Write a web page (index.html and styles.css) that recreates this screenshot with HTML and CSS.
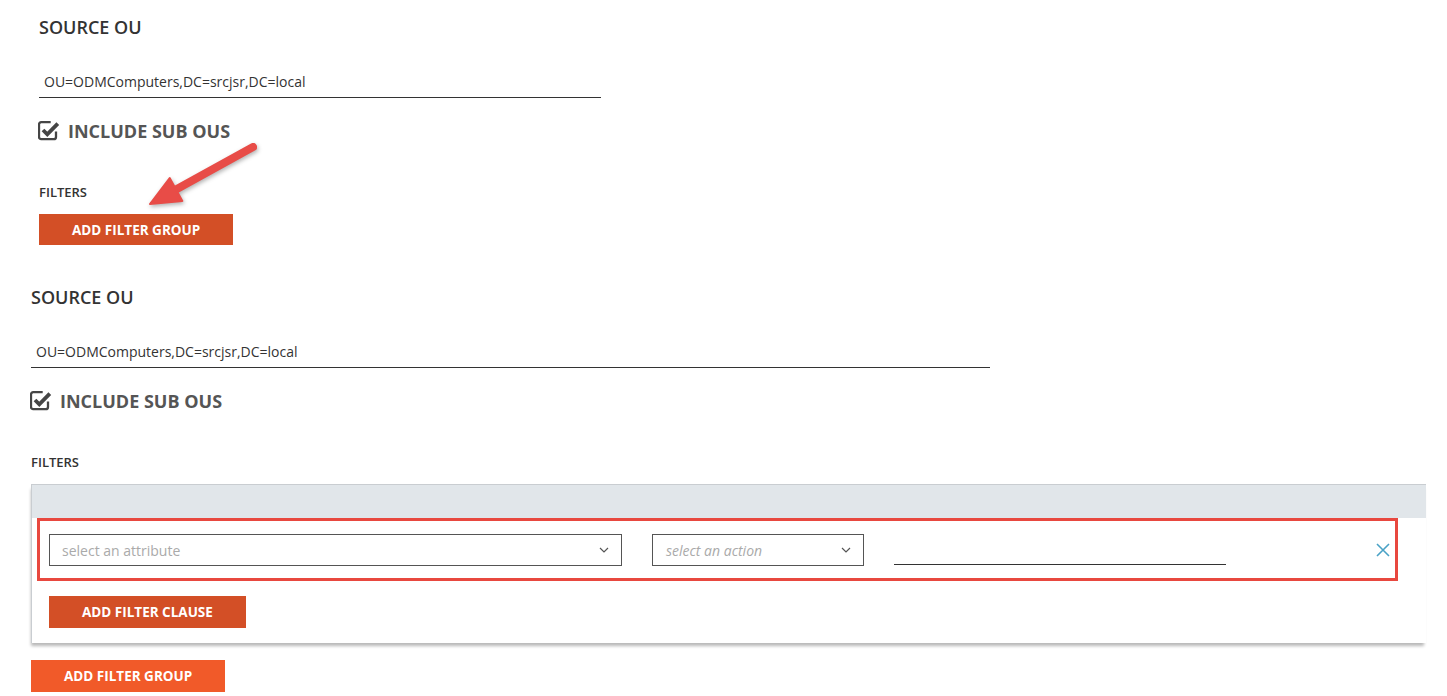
FILE: index.html
```html
<!DOCTYPE html>
<html lang="en">
<head>
  <meta charset="UTF-8" />
  <meta name="viewport" content="width=device-width, initial-scale=1.0" />
  <title>Source OU Filters</title>
  <link rel="stylesheet" href="styles.css">
</head>
<body>
  <div class="page">
    <!-- before: empty filters -->
    <section class="ou-block ou-top">
      <h2 class="block-title">SOURCE OU</h2>
      <div class="line-field narrow">OU=ODMComputers,DC=srcjsr,DC=local</div>
      <label class="include-row">
        <svg class="check-icon" viewBox="0 0 22 22" width="22" height="22">
          <path d="M18 12.5v5.5a2.2 2.2 0 0 1-2.2 2.2h-12.6a2.2 2.2 0 0 1-2.2-2.2v-12.6a2.2 2.2 0 0 1 2.2-2.2h9.5" fill="none" stroke="#454545" stroke-width="2.3"/>
          <path d="M5 11l4.3 4.3 10.5-10.6" fill="none" stroke="#454545" stroke-width="3.8"/>
        </svg>
        <span>INCLUDE SUB OUS</span>
      </label>
      <div class="small-label">FILTERS</div>
      <button class="btn btn-dark">ADD FILTER GROUP</button>
    </section>

    <!-- after: one filter group -->
    <section class="ou-block ou-bottom">
      <h2 class="block-title">SOURCE OU</h2>
      <div class="line-field wide">OU=ODMComputers,DC=srcjsr,DC=local</div>
      <label class="include-row">
        <svg class="check-icon" viewBox="0 0 22 22" width="22" height="22">
          <path d="M18 12.5v5.5a2.2 2.2 0 0 1-2.2 2.2h-12.6a2.2 2.2 0 0 1-2.2-2.2v-12.6a2.2 2.2 0 0 1 2.2-2.2h9.5" fill="none" stroke="#454545" stroke-width="2.3"/>
          <path d="M5 11l4.3 4.3 10.5-10.6" fill="none" stroke="#454545" stroke-width="3.8"/>
        </svg>
        <span>INCLUDE SUB OUS</span>
      </label>
      <div class="small-label">FILTERS</div>

      <div class="filter-group">
        <div class="group-head"></div>
        <div class="group-body">
          <div class="clause-row">
            <div class="select attr-select">
              <span class="placeholder">select an attribute</span>
              <svg class="chevron" viewBox="0 0 10 6" width="10" height="6"><path d="M1 1l4 4 4-4" fill="none" stroke="#555" stroke-width="1.2"/></svg>
            </div>
            <div class="select action-select">
              <span class="placeholder italic">select an action</span>
              <svg class="chevron" viewBox="0 0 10 6" width="10" height="6"><path d="M1 1l4 4 4-4" fill="none" stroke="#555" stroke-width="1.2"/></svg>
            </div>
            <div class="value-input"></div>
            <svg class="remove-icon" viewBox="0 0 14 14" width="14" height="14"><path d="M1 1l12 12M13 1L1 13" stroke="#4aa2c6" stroke-width="1.6"/></svg>
          </div>
          <button class="btn btn-dark clause-btn">ADD FILTER CLAUSE</button>
        </div>
      </div>

      <button class="btn btn-bright group-btn">ADD FILTER GROUP</button>
    </section>

    <svg class="callout-arrow" viewBox="0 0 150 90" width="150" height="90">
      <path d="M133 17L56 59.5" stroke="#e84c47" stroke-width="8" stroke-linecap="round"/>
      <path d="M30 74L49.7 48.1 62.3 70.9Z" fill="#e84c47" stroke="#e84c47" stroke-width="2" stroke-linejoin="round"/>
    </svg>
  </div>
</body>
</html>
```

FILE: styles.css
```css
body {
  margin: 0;
  font-family: "Open Sans", "Liberation Sans", Arial, sans-serif;
  color: #333;
  background: #fff;
}

.page {
  position: relative;
  width: 1447px;
  height: 696px;
  overflow: hidden;
}

.ou-block {
  display: flex;
  flex-direction: column;
  align-items: flex-start;
}

.ou-top {
  padding: 15px 0 0 39px;
}

.ou-bottom {
  padding: 40px 0 0 31px;
}

.block-title {
  margin: 0;
  font-size: 18px;
  line-height: 24px;
  font-weight: 600;
  color: #333;
}

.line-field {
  margin-top: 28px;
  height: 31px;
  line-height: 30px;
  padding-left: 5px;
  box-sizing: border-box;
  font-size: 14px;
  color: #333;
  border-bottom: 1px solid #333;
}

.line-field.narrow {
  width: 562px;
}

.line-field.wide {
  width: 959px;
}

.include-row {
  margin-top: 21px;
  height: 24px;
  display: flex;
  align-items: center;
  gap: 8px;
  font-size: 18px;
  font-weight: 700;
  color: #555;
}

.check-icon {
  display: block;
  margin-left: -1px;
  margin-top: -2px;
}

.small-label {
  margin-top: 40px;
  font-size: 13px;
  line-height: 18px;
  font-weight: 600;
  color: #333;
}

.btn {
  border: none;
  padding: 0 33px;
  height: 32px;
  font-family: inherit;
  font-size: 13.5px;
  font-weight: 700;
  color: #fff;
  cursor: pointer;
}

.ou-top .btn {
  margin-top: 13px;
  height: 31px;
}

.btn-dark {
  background-color: #d34f26;
}

.btn-bright {
  background-color: #f15a29;
}

.filter-group {
  margin-top: 13px;
  width: 1394px;
  border-top: 1px solid #c9cdd1;
  border-left: 1px solid #c9cdd1;
  box-shadow: -1px 4px 3px -1px rgba(0, 0, 0, 0.28);
}

.group-head {
  height: 33px;
  background: #e1e6ea;
}

.group-body {
  background: #fff;
  padding-bottom: 15px;
}

.clause-row {
  margin: 0 28px 0 5px;
  border: 3px solid #e8483f;
  padding: 13px 5px 12px 9px;
  display: flex;
  align-items: flex-start;
}

.select {
  height: 32px;
  box-sizing: border-box;
  border: 1px solid #555;
  display: flex;
  align-items: center;
  justify-content: space-between;
  padding: 0 12px;
  font-size: 14px;
}

.attr-select {
  width: 573px;
}

.action-select {
  width: 212px;
  margin-left: 30px;
  padding-left: 13px;
}

.placeholder {
  color: #aaa;
}

.italic {
  font-style: italic;
}

.value-input {
  margin-left: 30px;
  width: 332px;
  height: 31px;
  box-sizing: border-box;
  border-bottom: 1px solid #333;
}

.remove-icon {
  margin-left: auto;
  margin-top: 9px;
}

.clause-btn {
  margin: 15px 0 0 17px;
}

.group-btn {
  margin-top: 17px;
}

.callout-arrow {
  position: absolute;
  left: 120px;
  top: 130px;
  filter: drop-shadow(1px 2px 2px rgba(0, 0, 0, 0.3));
}
```
